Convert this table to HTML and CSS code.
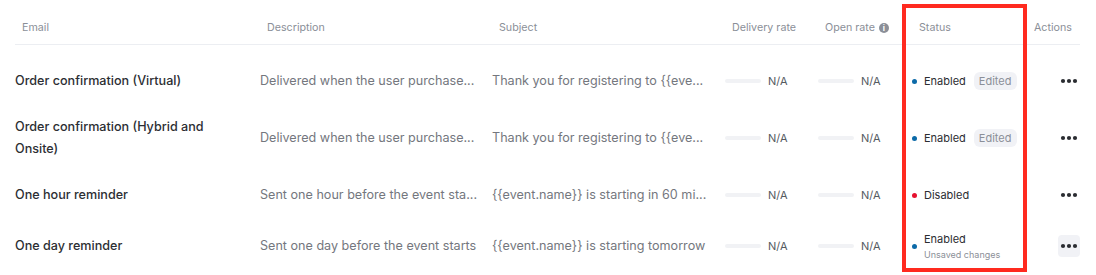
FILE: index.html
```html
<!DOCTYPE html>
<html>
<head>
<meta charset="utf-8">
<link rel="stylesheet" href="styles.css">
</head>
<body>
<div class="page">
  <div class="table">
    <div class="row head">
      <div class="hc">Email</div>
      <div class="hc">Description</div>
      <div class="hc">Subject</div>
      <div class="hc">Delivery rate</div>
      <div class="hc">Open rate <span class="info">i</span></div>
      <div class="hc">Status</div>
      <div class="hc">Actions</div>
    </div>
    <div class="body">
      <div class="row">
        <div class="c email">Order confirmation (Virtual)</div>
        <div class="c muted">Delivered when the user purchase...</div>
        <div class="c muted">Thank you for registering to {{eve...</div>
        <div class="c rate"><span class="bar"></span><span class="na">N/A</span></div>
        <div class="c rate"><span class="bar"></span><span class="na">N/A</span></div>
        <div class="c status"><span class="dot on"></span><span class="label">Enabled</span><span class="badge">Edited</span></div>
        <div class="c act"><span class="more"><svg width="22" height="22" viewBox="0 0 22 22"><circle cx="5" cy="11" r="2.1"/><circle cx="11" cy="11" r="2.1"/><circle cx="17" cy="11" r="2.1"/></svg></span></div>
      </div>
      <div class="row">
        <div class="c email">Order confirmation (Hybrid and Onsite)</div>
        <div class="c muted">Delivered when the user purchase...</div>
        <div class="c muted">Thank you for registering to {{eve...</div>
        <div class="c rate"><span class="bar"></span><span class="na">N/A</span></div>
        <div class="c rate"><span class="bar"></span><span class="na">N/A</span></div>
        <div class="c status"><span class="dot on"></span><span class="label">Enabled</span><span class="badge">Edited</span></div>
        <div class="c act"><span class="more"><svg width="22" height="22" viewBox="0 0 22 22"><circle cx="5" cy="11" r="2.1"/><circle cx="11" cy="11" r="2.1"/><circle cx="17" cy="11" r="2.1"/></svg></span></div>
      </div>
      <div class="row">
        <div class="c email">One hour reminder</div>
        <div class="c muted">Sent one hour before the event sta...</div>
        <div class="c muted">{{event.name}} is starting in 60 mi...</div>
        <div class="c rate"><span class="bar"></span><span class="na">N/A</span></div>
        <div class="c rate"><span class="bar"></span><span class="na">N/A</span></div>
        <div class="c status"><span class="dot off"></span><span class="label">Disabled</span></div>
        <div class="c act"><span class="more"><svg width="22" height="22" viewBox="0 0 22 22"><circle cx="5" cy="11" r="2.1"/><circle cx="11" cy="11" r="2.1"/><circle cx="17" cy="11" r="2.1"/></svg></span></div>
      </div>
      <div class="row">
        <div class="c email">One day reminder</div>
        <div class="c muted">Sent one day before the event starts</div>
        <div class="c muted">{{event.name}} is starting tomorrow</div>
        <div class="c rate"><span class="bar"></span><span class="na">N/A</span></div>
        <div class="c rate"><span class="bar"></span><span class="na">N/A</span></div>
        <div class="c status"><span class="dot on"></span><span class="stack"><span class="label">Enabled</span><span class="sub">Unsaved changes</span></span></div>
        <div class="c act"><span class="more hover"><svg width="22" height="22" viewBox="0 0 22 22"><circle cx="5" cy="11" r="2.1"/><circle cx="11" cy="11" r="2.1"/><circle cx="17" cy="11" r="2.1"/></svg></span></div>
      </div>
    </div>
  </div>
  <div class="highlight"></div>
</div>
</body>
</html>
```

FILE: styles.css
```css
* { box-sizing: border-box; }
html, body { margin: 0; padding: 0; background: #ffffff; }
body {
  font-family: Inter, "Noto Sans", "Liberation Sans", sans-serif;
  color: #26282d;
  width: 1096px;
  height: 275px;
  overflow: hidden;
}
.page { position: relative; padding: 0 16px 0 15px; }
.row {
  display: grid;
  grid-template-columns: 245px 232px 233px 93px 94px 115px 53px;
  align-items: center;
}
.head {
  padding-top: 19px;
  padding-bottom: 7px;
  border-bottom: 1px solid #eceef2;
  height: 45px;
}
.hc {
  font-size: 10.7px;
  line-height: 18px;
  color: #8b8f98;
  padding-left: 7px;
  display: flex;
  align-items: center;
  white-space: nowrap;
}
.info {
  display: inline-flex;
  width: 10px;
  height: 10px;
  border-radius: 50%;
  background: #8b8f98;
  color: #fff;
  font-size: 8px;
  font-weight: 700;
  line-height: 10px;
  justify-content: center;
  margin-left: 4px;
}
.body { padding-top: 13px; }
.body .row { padding: 12px 0; }
.c {
  font-size: 12.6px;
  line-height: 22px;
  white-space: nowrap;
  padding-right: 16px;
}
.email {
  font-weight: 500;
  color: #2c2e33;
  white-space: normal;
  padding-right: 30px;
}
.muted { color: #74777e; }
.rate { display: flex; align-items: center; }
.bar {
  width: 36px;
  height: 4px;
  border-radius: 2px;
  background: #f1f2f5;
  margin-right: 7px;
}
.na { font-size: 11px; color: #555a61; }
.status { display: flex; align-items: center; font-size: 11px; }
.dot {
  width: 5px;
  height: 5px;
  border-radius: 50%;
  margin-right: 7px;
  flex: none;
}
.dot.on { background: #0c6aa8; }
.dot.off { background: #e6112f; }
.label { color: #2b2d32; line-height: 18px; }
.badge {
  margin-left: 8px;
  background: #f1f2f6;
  color: #8b8f98;
  font-size: 11px;
  line-height: 18px;
  padding: 0 5px;
  border-radius: 6px;
}
.stack { display: flex; flex-direction: column; }
.sub { font-size: 9px; line-height: 14px; color: #8b8f98; }
.act { display: flex; justify-content: flex-end; padding-right: 0; }
.more {
  display: flex;
  width: 22px;
  height: 22px;
  border-radius: 4px;
  fill: #2a2c31;
}
.more.hover { background: #f1f2f6; }
.highlight {
  position: absolute;
  left: 902px;
  top: 4px;
  width: 125px;
  height: 268px;
  border: 4px solid #ff2a1f;
}
```
